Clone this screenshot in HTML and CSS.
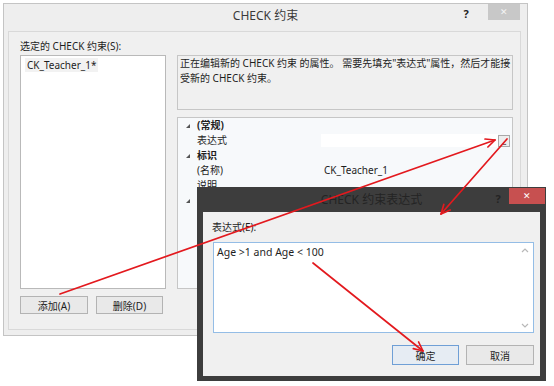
FILE: index.html
```html
<!DOCTYPE html>
<html>
<head>
<meta charset="UTF-8">
<title>CHECK 约束</title>
<link rel="stylesheet" href="styles.css">
</head>
<body>

<div class="win main">
  <div class="title">
    <span class="caption">CHECK 约束</span>
    <span class="help">?</span>
    <span class="close">&#10005;</span>
  </div>
  <div class="panel">
    <div class="leftcol">
      <div class="lbl">选定的 CHECK 约束(S):</div>
      <div class="list"><span class="item">CK_Teacher_1*</span></div>
      <div class="btnrow">
        <button class="btn">添加(A)</button>
        <button class="btn">删除(D)</button>
      </div>
    </div>
    <div class="rightcol">
      <div class="desc">正在编辑新的 CHECK 约束 的属性。 需要先填充"表达式"属性，然后才能接<br>受新的 CHECK 约束。</div>
      <div class="props">
        <div class="row cat"><span class="gut"><i class="tri"></i></span><span class="name">(常规)</span></div>
        <div class="row"><span class="gut"></span><span class="name">表达式</span><span class="val edit"></span><span class="dots">...</span></div>
        <div class="row cat"><span class="gut"><i class="tri"></i></span><span class="name">标识</span></div>
        <div class="row"><span class="gut"></span><span class="name">(名称)</span><span class="val">CK_Teacher_1</span></div>
        <div class="row"><span class="gut"></span><span class="name">说明</span></div>
        <div class="row cat"><span class="gut"><i class="tri"></i></span><span class="name">表设计器</span></div>
      </div>
    </div>
  </div>
</div>

<div class="win dlg">
  <div class="dtitle">
    <span class="dcaption">CHECK 约束表达式</span>
    <span class="dhelp">?</span>
    <span class="dclose">&#10005;</span>
  </div>
  <div class="dbody">
    <div class="dlbl">表达式(E):</div>
    <div class="area">
      <div class="text">Age &gt;1 and Age &lt; 100</div>
      <div class="sbar">
        <svg width="8" height="5" viewBox="0 0 8 5"><polyline points="1,4 4,1 7,4" fill="none" stroke="#b8b8b8" stroke-width="1.2"/></svg>
        <svg width="8" height="5" viewBox="0 0 8 5"><polyline points="1,1 4,4 7,1" fill="none" stroke="#b8b8b8" stroke-width="1.2"/></svg>
      </div>
    </div>
    <div class="dbtns">
      <button class="btn def">确定</button>
      <button class="btn wide">取消</button>
    </div>
  </div>
</div>

<svg class="arrows" width="554" height="386" viewBox="0 0 554 386">
  <g stroke="#e3191e" stroke-width="1.7" fill="none" stroke-linecap="round" stroke-linejoin="round">
    <line x1="60" y1="294" x2="495" y2="140"/>
    <polyline points="485,139 495,140 487.9,147"/>
    <line x1="507" y1="139" x2="441" y2="214"/>
    <polyline points="450.2,210 441,214 443.8,204.4"/>
    <line x1="313" y1="263" x2="423" y2="351"/>
    <polyline points="418.6,342 423,351 413.3,348.6"/>
  </g>
</svg>

</body>
</html>
```

FILE: styles.css
```css
* { box-sizing: border-box; }

body {
    margin: 0;
    width: 554px;
    height: 386px;
    position: relative;
    overflow: hidden;
    background: #ffffff;
    font-family: "Noto Sans", "Noto Sans CJK SC", sans-serif;
    font-size: 10px;
    color: #1e1e1e;
}

/* windows on the desktop */
.win {
    position: absolute;
    display: flex;
    flex-direction: column;
}

.main {
    left: 3px;
    top: 3px;
    width: 525px;
    height: 333px;
    background: #eeeeee;
    border: 1px solid #c4c4c4;
}

.title {
    height: 27px;
    flex: none;
    display: flex;
    align-items: flex-start;
}

.caption {
    flex: 1;
    padding-left: 71px;
    text-align: center;
    font-size: 12px;
    line-height: 24px;
    color: #3a3a3a;
}

.help {
    width: 20px;
    margin-right: 12px;
    text-align: center;
    font-weight: bold;
    font-size: 11px;
    line-height: 20px;
    color: #222;
}

.close {
    width: 32px;
    height: 16px;
    margin-right: 7px;
    background: #c8c8c8;
    color: #f4f4f4;
    text-align: center;
    font-size: 9px;
    line-height: 16px;
}

.panel {
    flex: 1;
    margin: 0 6px 5px 4px;
    padding: 0 7px 0 11px;
    border: 1px solid #d9d9d9;
    background: #f0f0f0;
    display: flex;
    gap: 11px;
}

.leftcol {
    width: 146px;
    padding-top: 7px;
    display: flex;
    flex-direction: column;
}

.lbl {
    line-height: 14px;
    margin-bottom: 2px;
}

.list {
    height: 234px;
    background: #ffffff;
    border: 1px solid #b9b9b9;
    padding: 2px 4px;
}

.item {
    display: inline-block;
    padding: 0 2px;
    line-height: 14px;
    background: #f2f2f2;
}

.btnrow {
    display: flex;
    gap: 8px;
    margin-top: 7px;
}

.btn {
    width: 67px;
    height: 18px;
    padding: 0;
    border: 1px solid #b3b3b3;
    background: #e9e9e9;
    font-family: "Noto Sans", "Noto Sans CJK SC", sans-serif;
    font-size: 10px;
    color: #1e1e1e;
}

.btnrow .btn:first-child { width: 68px; }

.rightcol {
    width: 336px;
    padding-top: 23px;
    display: flex;
    flex-direction: column;
    gap: 7px;
}

.desc {
    height: 55px;
    padding: 0 2px;
    border: 1px solid #c6c6c6;
    background: #f0f0f0;
    line-height: 15px;
    white-space: nowrap;
    overflow: hidden;
}

.props {
    height: 172px;
    border: 1px solid #c6c6c6;
    background: #f7f9fb;
}

.row {
    height: 15px;
    display: flex;
    align-items: center;
    line-height: 15px;
}

.gut {
    width: 19px;
    height: 15px;
    display: flex;
    align-items: center;
    justify-content: center;
}

.tri {
    width: 0;
    height: 0;
    border-left: 4px solid transparent;
    border-bottom: 4px solid #555555;
}

.name {
    width: 124px;
}

.cat .name { font-weight: bold; }

.val {
    flex: 1;
    padding-left: 3px;
}

.val.edit {
    height: 13px;
    background: #ffffff;
}

.dots {
    width: 12px;
    height: 12px;
    margin-right: 2px;
    border: 1px solid #a9a9a9;
    background: #eeeeee;
    font-size: 8px;
    line-height: 12px;
    text-align: center;
    letter-spacing: -1px;
}

/* expression dialog */
.dlg {
    left: 197px;
    top: 187px;
    width: 349px;
    height: 194px;
    padding: 0 6px 5px 6px;
    background: #3d3d3d;
}

.dtitle {
    height: 25px;
    flex: none;
    margin: 0 -6px;
    display: flex;
    align-items: flex-start;
}

.dcaption {
    flex: 1;
    padding-left: 55px;
    text-align: center;
    font-size: 12px;
    line-height: 25px;
    color: #242424;
}

.dhelp {
    width: 14px;
    margin-right: 4px;
    text-align: center;
    font-weight: bold;
    font-size: 11px;
    line-height: 24px;
    color: #242424;
}

.dclose {
    width: 36px;
    height: 16px;
    margin: 1px 1px 0 0;
    background: #c75050;
    color: #ffffff;
    text-align: center;
    font-size: 9px;
    line-height: 16px;
}

.dbody {
    flex: 1;
    padding: 8px 6px 0 10px;
    background: #f0f0f0;
    display: flex;
    flex-direction: column;
}

.dlbl {
    line-height: 14px;
    margin-bottom: 8px;
    margin-left: -1px;
}

.area {
    height: 91px;
    border: 1px solid #94bde6;
    background: #ffffff;
    display: flex;
}

.text {
    flex: 1;
    padding: 2px 3px;
    line-height: 14px;
    font-size: 10.5px;
}

.sbar {
    width: 17px;
    padding: 5px 0 4px;
    display: flex;
    flex-direction: column;
    justify-content: space-between;
    align-items: center;
}

.dbtns {
    display: flex;
    justify-content: flex-end;
    gap: 7px;
    margin-top: 12px;
}

.dbtns .btn { height: 20px; }
.dbtns .wide { width: 68px; }

.btn.def {
    border-color: #6f9fd6;
    background: #e6ecf3;
}

.arrows {
    position: absolute;
    left: 0;
    top: 0;
    pointer-events: none;
}
```
